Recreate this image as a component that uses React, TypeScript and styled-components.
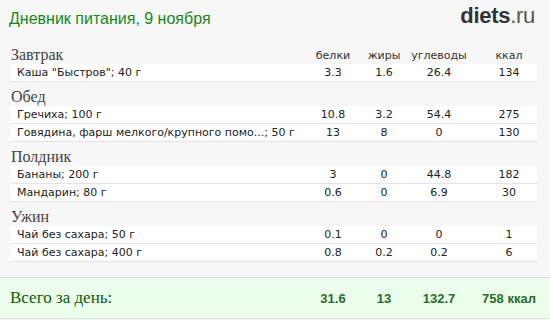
import React from "react";
import styled, { createGlobalStyle } from "styled-components";

const Global = createGlobalStyle`
  html, body { margin: 0; padding: 0; background: #f7f7f7; }
  * { box-sizing: border-box; }
`;

const Page = styled.div`
  width: 550px;
  height: 320px;
  background: #f7f7f7;
  display: flex;
  flex-direction: column;
  overflow: hidden;
`;

const Header = styled.header`
  height: 38px;
  display: flex;
  align-items: center;
  justify-content: space-between;
  padding: 0 15px 0 9px;
`;

const Title = styled.h1`
  margin: 0;
  font-family: "Liberation Sans", Arial, sans-serif;
  font-weight: normal;
  font-size: 16px;
  color: #1a861a;
`;

const Logo = styled.div`
  margin-bottom: 6px;
  font-family: "Liberation Sans", Arial, sans-serif;
  font-size: 22px;
  color: #3a3a3a;
  letter-spacing: -0.3px;
  b { font-weight: bold; color: #333; }
  span { color: #555; }
`;

const Diary = styled.div`
  padding: 8px 13px 9px 10px;
`;

const Section = styled.section`
  margin-bottom: 6px;
  &:last-child { margin-bottom: 0; }
`;

const Grid = styled.div`
  display: grid;
  grid-template-columns: 1fr 52px 50px 60px 68px;
  align-items: center;
`;

const HeadRow = styled(Grid)`
  height: 18px;
`;

const Heading = styled.h2`
  margin: 0;
  font-family: "Liberation Serif", serif;
  font-weight: normal;
  font-size: 16px;
  color: #444;
  line-height: 18px;
  padding-left: 1px;
`;

const Label = styled.div<{ $last?: boolean }>`
  font-family: "DejaVu Sans", sans-serif;
  font-size: 11px;
  color: #333;
  text-align: center;
  padding-left: ${(p) => (p.$last ? "12px" : "0")};
`;

const FoodRow = styled(Grid)`
  height: 18px;
  background: #fff;
  border-bottom: 1px solid #e4e4e4;
  font-family: "DejaVu Sans", sans-serif;
  font-size: 11px;
  color: #222;
`;

const Name = styled.div`
  padding-left: 7px;
  white-space: nowrap;
  overflow: hidden;
`;

const Num = styled.div<{ $last?: boolean }>`
  text-align: center;
  padding-left: ${(p) => (p.$last ? "12px" : "0")};
`;

const Total = styled(Grid)`
  height: 42px;
  margin-top: auto;
  margin-bottom: 1px;
  background: #ebfdeb;
  border-top: 1px solid #dcdcdc;
  border-bottom: 1px solid #dcdcdc;
  padding: 0 13px 0 10px;
`;

const TotalLabel = styled.div`
  font-family: "Liberation Serif", serif;
  font-size: 17px;
  color: #0d5a0d;
`;

const TotalNum = styled.div<{ $last?: boolean }>`
  font-family: "Liberation Sans", Arial, sans-serif;
  font-weight: bold;
  font-size: 13px;
  color: #2b6b2b;
  text-align: center;
  padding-left: ${(p) => (p.$last ? "12px" : "0")};
  white-space: nowrap;
`;

type Food = [string, string, string, string, string];
const meals: { name: string; foods: Food[] }[] = [
  { name: "Завтрак", foods: [["Каша \"Быстров\"; 40 г", "3.3", "1.6", "26.4", "134"]] },
  {
    name: "Обед",
    foods: [
      ["Гречиха; 100 г", "10.8", "3.2", "54.4", "275"],
      ["Говядина, фарш мелкого/крупного помо...; 50 г", "13", "8", "0", "130"],
    ],
  },
  {
    name: "Полдник",
    foods: [
      ["Бананы; 200 г", "3", "0", "44.8", "182"],
      ["Мандарин; 80 г", "0.6", "0", "6.9", "30"],
    ],
  },
  {
    name: "Ужин",
    foods: [
      ["Чай без сахара; 50 г", "0.1", "0", "0", "1"],
      ["Чай без сахара; 400 г", "0.8", "0.2", "0.2", "6"],
    ],
  },
];

const labels = ["белки", "жиры", "углеводы", "ккал"];

export default function App() {
  return (
    <Page>
      <Global />
      <Header>
        <Title>Дневник питания, 9 ноября</Title>
        <Logo>
          <b>diets</b>
          <span>.ru</span>
        </Logo>
      </Header>
      <Diary>
        {meals.map((m, i) => (
          <Section key={m.name}>
            <HeadRow>
              <Heading>{m.name}</Heading>
              {i === 0 &&
                labels.map((l, j) => (
                  <Label key={l} $last={j === 3}>
                    {l}
                  </Label>
                ))}
            </HeadRow>
            {m.foods.map((f) => (
              <FoodRow key={f[0]}>
                <Name>{f[0]}</Name>
                <Num>{f[1]}</Num>
                <Num>{f[2]}</Num>
                <Num>{f[3]}</Num>
                <Num $last>{f[4]}</Num>
              </FoodRow>
            ))}
          </Section>
        ))}
      </Diary>
      <Total>
        <TotalLabel>Всего за день:</TotalLabel>
        <TotalNum>31.6</TotalNum>
        <TotalNum>13</TotalNum>
        <TotalNum>132.7</TotalNum>
        <TotalNum $last>758 ккал</TotalNum>
      </Total>
    </Page>
  );
}
